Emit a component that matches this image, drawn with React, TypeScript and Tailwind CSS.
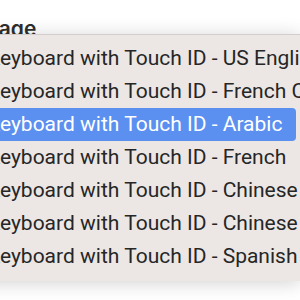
import React from "react";

const items = [
  "Keyboard with Touch ID - US English",
  "Keyboard with Touch ID - French Canadian",
  "Keyboard with Touch ID - Arabic",
  "Keyboard with Touch ID - French",
  "Keyboard with Touch ID - Chinese (Simplified)",
  "Keyboard with Touch ID - Chinese (Traditional)",
  "Keyboard with Touch ID - Spanish",
];

export default function App() {
  return (
    <div
      className="relative w-[300px] h-[300px] overflow-hidden bg-white"
      style={{ fontFamily: "Roboto, 'Liberation Sans', sans-serif" }}
    >
      <div
        className="ml-[-64px] pt-[17px] text-[21px] leading-[24px] font-semibold text-[#2e2e2e]"
        style={{ fontFamily: "Inter, 'Liberation Sans', sans-serif" }}
      >
        Language
      </div>
      <div className="absolute left-[-40px] top-[34px] w-[341px] bg-[#ece7e5] border-t border-[#d3cecc] shadow-[0_2px_18px_rgba(0,0,0,0.18)] pt-[7px] pb-[8px]">
        {items.map((t, i) => (
          <div key={i} className="h-[33px] pr-[5px]">
            <div
              className={
                i === 2
                  ? "h-full flex items-center pl-[27px] rounded-[4px] bg-[#5b8ff0] text-white whitespace-nowrap text-[21px]"
                  : "h-full flex items-center pl-[27px] text-[#262626] whitespace-nowrap text-[21px]"
              }
            >
              {t}
            </div>
          </div>
        ))}
      </div>
    </div>
  );
}
